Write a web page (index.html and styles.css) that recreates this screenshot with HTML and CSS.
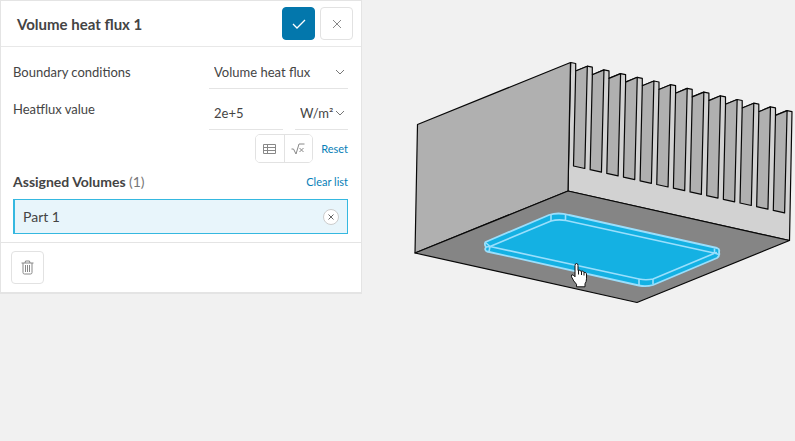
FILE: index.html
```html
<!DOCTYPE html>
<html lang="en">
<head>
<meta charset="utf-8">
<meta name="viewport" content="width=device-width, initial-scale=1">
<title>Volume heat flux 1</title>
<link rel="stylesheet" href="styles.css">
</head>
<body>
<main class="workspace">
  <form class="panel">
    <header class="panel-header">
      <h1 class="title">Volume heat flux 1</h1>
      <button class="square primary" type="button" aria-label="Apply">
        <svg width="14" height="10" viewBox="0 0 14 10"><path d="M1 5l4 4 8-8"/></svg>
      </button>
      <button class="square" type="button" aria-label="Close">
        <svg width="10" height="10" viewBox="0 0 10 10"><path d="M1 1l8 8M9 1L1 9"/></svg>
      </button>
    </header>

    <div class="panel-body">
      <div class="row">
        <label class="label" for="condition">Boundary conditions</label>
        <div class="field select">
          <select id="condition"><option>Volume heat flux</option></select>
          <svg class="chevron" width="10" height="6" viewBox="0 0 10 6"><path d="M1 1l4 4 4-4"/></svg>
        </div>
      </div>
      <div class="row value-row">
        <label class="label" for="value">Heatflux value</label>
        <div class="pair">
          <div class="field amount"><input id="value" type="text" value="2e+5"></div>
          <div class="field select unit">
            <select aria-label="Unit"><option>W/m²</option></select>
            <svg class="chevron" width="10" height="6" viewBox="0 0 10 6"><path d="M1 1l4 4 4-4"/></svg>
          </div>
        </div>
      </div>
      <div class="tools">
        <div class="group">
          <button type="button" aria-label="Table input">
            <svg width="13" height="10" viewBox="0 0 13 10"><path d="M.5.5h12v9H.5zM.5 3.5h12M.5 6.5h12M4.5.5v9"/></svg>
          </button>
          <button type="button" aria-label="Formula input">
            <svg width="14" height="12" viewBox="0 0 14 12"><path d="M.5 6h2l2.500 5L8 1h5.500M8.500 5l4 4M12.500 5l-4 4"/></svg>
          </button>
        </div>
        <a class="link" href="#">Reset</a>
      </div>
      <div class="assigned">
        <h2 class="subtitle">Assigned Volumes <span class="count">(1)</span></h2>
        <a class="link" href="#">Clear list</a>
      </div>
      <div class="part">
        <span>Part 1</span>
        <button class="remove" type="button" aria-label="Remove Part 1">
          <svg width="6" height="6" viewBox="0 0 6 6"><path d="M.5.5l5 5M5.500.5l-5 5"/></svg>
        </button>
      </div>
    </div>

    <footer class="panel-footer">
      <button class="square" type="button" aria-label="Delete">
        <svg width="13" height="15" viewBox="0 0 13 15"><path d="M.5 3h12M4 3l.5-2h4L9 3M2 3v9.500q0 1.500 1.500 1.500h6q1.500 0 1.500-1.500V3M4.500 5v7M6.500 5v7M8.500 5v7"/></svg>
      </button>
    </footer>
  </form>

  <section class="viewer" aria-label="3D model">
    <svg class="model" viewBox="362 0 433 441" role="img" aria-label="Heat sink">
      <defs>
        <path id="slot" d="M575.700 71L587.300 66.200 584.800 168.500 573.500 166z"/>
      </defs>
      <path class="front" d="M570.700 62.500L575.700 63.500V71L587.300 66.200L592.300 67.200V74.700L604 69.900L609 70.900V78.400L620.600 73.600L625.600 74.600V82.100L637.300 77.300L642.300 78.300V85.800L654 81L659 82V89.500L670.600 84.700L675.600 85.700V93.200L687.200 88.400L692.200 89.400V96.900L703.900 92.100L708.900 93.100V100.600L720.500 95.800L725.500 96.800V104.300L737.200 99.500L742.200 100.500V108L753.800 103.200L758.800 104.200V111.700L770.500 106.900L775.500 107.900V115.400L787.100 110.600L792 111.600L789.500 240.500L568 191z"/>
      <g class="slots">
        <use href="#slot"/><use href="#slot" x="16.650" y="3.700"/><use href="#slot" x="33.300" y="7.400"/><use href="#slot" x="49.950" y="11.100"/><use href="#slot" x="66.600" y="14.800"/><use href="#slot" x="83.250" y="18.500"/><use href="#slot" x="99.900" y="22.200"/><use href="#slot" x="116.550" y="25.900"/><use href="#slot" x="133.200" y="29.600"/><use href="#slot" x="149.850" y="33.300"/><use href="#slot" x="166.500" y="37"/><use href="#slot" x="183.150" y="40.700"/><use href="#slot" x="199.800" y="44.400"/>
      </g>
      <path class="side" d="M417.500 124.500L570.500 62.500 568 191 415 253z"/>
      <path class="base" d="M415 253L568 191 789.500 240.500 637 302.500z"/>
      <path class="plate" d="M485.500 242L549 215Q558 212 569 215L717 248Q720 249 719 252Q720 256 717 258L653 285Q646 287 639 285.500L487 251.500Q484 250 486 247Q484 244 485.500 242z"/>
      <path class="plate-line" d="M486 247L490 246.500 551 221Q558 219 566 220.500L714 253 717 252.500M714 253.500L653 279Q646 280.500 639 279L490 246.500M485.500 242.500L490 246.500 489 251.500M551 215V221M565.500 214.500V220.500M639 279V285M653 279V284.500M714.500 248.500V253L719 254.500"/>
      <path class="cursor" d="M576.500 263.500q1.500 0 1.500 2v5q2-1 3 .8 2-.8 3 1 2-.3 2.500 1.500v5q0 3-1.500 5v3h-8.500v-2.500q-3-3-5-7.500-.6-2.500 1.500-2l2 2v-11.300q0-2 1.500-2z"/>
      <path class="cursor-lines" d="M578.500 270.500v4M581.500 271.500v3.500M584 272.500v3"/>
    </svg>
  </section>
</main>
</body>
</html>
```
FILE: styles.css
```css
* { box-sizing: border-box; }

body {
  margin: 0;
  background: #f1f1f1;
  color: #444;
  font: 14px/20px Lato, "Liberation Sans", sans-serif;
}

.workspace { display: flex; align-items: flex-start; }

.panel {
  flex: 0 0 362px;
  background: #fff;
  border: 1px solid #e4e4e4;
  border-bottom-width: 2px;
}

.panel-header {
  display: flex;
  align-items: center;
  gap: 5px;
  padding: 6px 8px 6px 16px;
  border-bottom: 1px solid #e8e8e8;
}

.title { flex: 1; margin: 0; font-size: 15px; font-weight: 700; }

button {
  display: grid;
  place-items: center;
  padding: 0;
  border: 0;
  background: #fff;
  color: #888;
}

svg { fill: none; stroke: currentColor; }

.square {
  width: 33px;
  height: 33px;
  border: 1px solid #e2e2e2;
  border-radius: 4px;
}

.primary { background: #0377ac; border-color: #0377ac; color: #fff; }
.primary svg { stroke-width: 1.3; }

.panel-body { padding: 8px 13px 8px 12px; }

.row { display: grid; grid-template-columns: 1fr 139px; font-size: 13px; }
.label { padding-top: 7px; }

.value-row { padding-top: 7px; }
.value-row .label { padding-top: 3px; }
.value-row .field { height: 34px; }

.pair { display: grid; grid-template-columns: 74px 53px; gap: 12px; }

.field {
  display: flex;
  align-items: center;
  position: relative;
  height: 34px;
  border-bottom: 1px solid #e4e4e4;
}

.field select,
.field input {
  width: 100%;
  height: 32px;
  padding: 0 5px;
  border: 0;
  background: transparent;
  color: inherit;
  font: inherit;
  appearance: none;
}

.chevron { position: absolute; right: 3px; color: #777; pointer-events: none; }

.tools {
  display: flex;
  justify-content: flex-end;
  align-items: center;
  gap: 8px;
  padding-top: 4px;
}

.group {
  display: flex;
  width: 58px;
  height: 29px;
  border: 1px solid #e2e2e2;
  border-radius: 5px;
  overflow: hidden;
}
.group button { flex: 1; }
.group button + button { border-left: 1px solid #e2e2e2; }

.link { color: #0780b7; font-size: 11px; text-decoration: none; }

.assigned {
  display: flex;
  justify-content: space-between;
  align-items: center;
  padding: 9px 0 7px;
}
.subtitle { margin: 0; font-size: 14px; font-weight: 700; }
.count { color: #777; font-weight: 400; }

.part {
  display: flex;
  justify-content: space-between;
  align-items: center;
  height: 35px;
  padding: 0 8px;
  border: 1px solid #35b8e0;
  border-left-width: 2px;
  background: #e8f5fb;
}

.remove {
  width: 16px;
  height: 16px;
  border: 1px solid #ccc;
  border-radius: 50%;
  color: #666;
}

.panel-footer { padding: 8px 10px; border-top: 1px solid #e4e4e4; }

.viewer { flex: 1; min-width: 0; }
.model { display: block; width: 100%; stroke: #080808; stroke-width: 1.2; stroke-linejoin: round; }
.front { fill: #d2d2d2; }
.slots, .side { fill: #b0b0b0; }
.base { fill: #858585; }
.plate { fill: #14b1e3; stroke: #9adffc; stroke-width: 1.8; }
.plate-line { stroke: #9adffc; stroke-width: 1.6; }
.cursor { fill: #fff; stroke: #111; stroke-width: 1; }
.cursor-lines { stroke: #111; stroke-width: 1; }
```
